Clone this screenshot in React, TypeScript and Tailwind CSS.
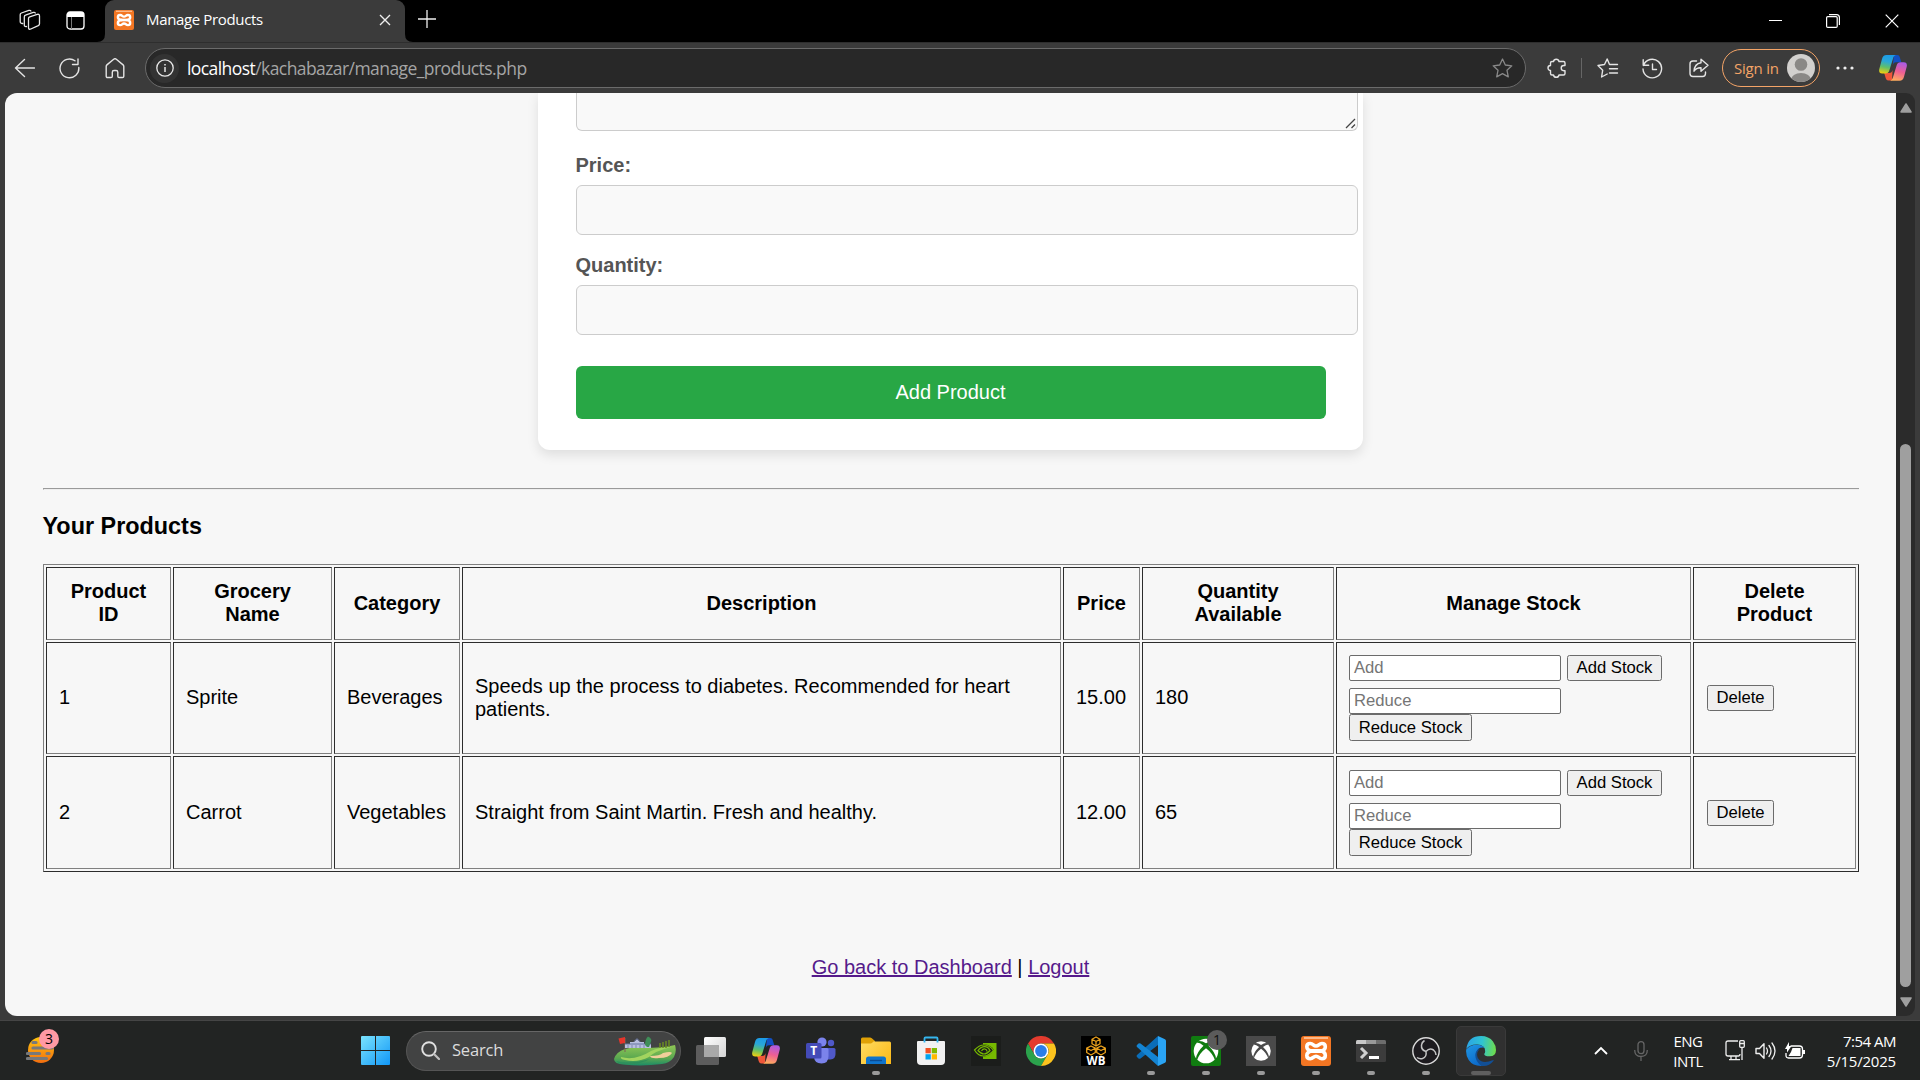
import React from "react";

function Svg({ w, h, vb, children, className = "" }: { w: number; h: number; vb?: string; children: React.ReactNode; className?: string }) {
  return (
    <svg width={w} height={h} viewBox={vb ?? `0 0 ${w} ${h}`} fill="none" className={"block shrink-0 " + className}>
      {children}
    </svg>
  );
}

function Xampp({ size }: { size: number }) {
  return (
    <Svg w={size} h={size} vb="0 0 30 30">
      <rect width="30" height="30" rx="3" fill="#f37623" />
      <path d="M3 1h24v2H3z" fill="#fbb98a" />
      <path
        d="M11.500 15C7 14.500 5.800 12.500 5.800 10.700 5.800 8.600 7.400 7.500 9.300 7.500c3 0 3 2.500 5.700 2.500s2.900-2.500 5.900-2.500c2 0 3.400 1.200 3.400 3.200 0 1.900-1.200 3.800-4.800 4.300 3.700.5 4.800 2.400 4.800 4.500 0 2-1.400 3.200-3.400 3.200-3 0-3.100-2.500-5.900-2.500s-2.700 2.500-5.700 2.500c-2 0-3.500-1.200-3.500-3.200 0-2.100 1.200-4 5.700-4.500z"
        stroke="#fff"
        strokeWidth="3.600"
        strokeLinejoin="round"
      />
      <path d="M10 15h10" stroke="#fff" strokeWidth="4" />
    </Svg>
  );
}

function Copilot() {
  return (
    <Svg w={28} h={26}>
      <defs>
        <linearGradient id="cpa" x1="10" y1="0" x2="6" y2="19" gradientUnits="userSpaceOnUse">
          <stop stopColor="#1b9be8" />
          <stop offset=".35" stopColor="#2aa7d8" />
          <stop offset=".65" stopColor="#5fbf6b" />
          <stop offset="1" stopColor="#f4cf0b" />
        </linearGradient>
        <linearGradient id="cpb" x1="22" y1="7" x2="17" y2="26" gradientUnits="userSpaceOnUse">
          <stop stopColor="#a95be6" />
          <stop offset=".5" stopColor="#ee5f93" />
          <stop offset="1" stopColor="#ffb05c" />
        </linearGradient>
      </defs>
      <path d="M15 0h3c2 0 2.500 1.300 3 3l1.300 4.200H17c-2 0-2.600 1-3.200 3z" fill="#1250c4" />
      <path d="M13 25.500H9.500c-2 0-2.600-1.500-3-3L5.200 18H10c2.300 0 3-1 3.600-3z" fill="#f0573a" />
      <path d="M7.500 0H17c-1.800.4-2.400 1.600-2.900 3.200L10.300 15.500c-.6 2-1.700 3-3.900 3H3.200C.5 18.500-.3 16.600.3 14L3 4C3.700 1.500 5 0 7.500 0z" fill="url(#cpa)" />
      <path d="M20.500 25.800H11c1.800-.4 2.400-1.600 2.900-3.200l3.800-12.300c.6-2 1.700-3 3.900-3h3.200c2.700 0 3.500 1.900 2.900 4.500L25 21.800c-.7 2.500-2 4-4.500 4z" fill="url(#cpb)" />
    </Svg>
  );
}

const tool = { stroke: "#e4e4e4", strokeWidth: 1.4, strokeLinecap: "round" as const, strokeLinejoin: "round" as const };

function TabStrip() {
  return (
    <div className="flex h-[42px] w-full shrink-0 items-start bg-black">
      <div className="flex h-[42px] w-[97px] items-center gap-[25px] pl-[19px] pb-[2px]">
        <Svg w={22} h={22}>
          <g stroke="#e8e8e8" strokeWidth="1.300" strokeLinejoin="round" strokeLinecap="round">
            <path d="M9.500 9.500q0-1.300 1.200-1.700l7.500-2.400q2.300-.7 2.300 1.500v7.800q0 1.400-1.200 2L11.800 20q-2.300.9-2.300-1.300z" />
            <path d="M7.500 17.500q-2.200.4-2.200-1.600V7.900q0-1.300 1.200-1.700L14.300 3.400q1.500-.4 2 .6" />
            <path d="M3.800 14.500q-2.600.2-2.600-2V5.700q0-1.300 1.200-1.700l7.500-2.600q1.500-.4 2 .6" />
          </g>
        </Svg>
        <Svg w={19} h={19}>
          <rect x="1" y="1" width="17" height="17" rx="3" stroke="#fff" strokeWidth="1.300" />
          <path d="M1 6V4q0-3 3-3h11q3 0 3 3v2z" fill="#fff" />
          <path d="M5.500 6v12" stroke="#777" />
        </Svg>
      </div>
      <Svg w={8} h={42}>
        <path d="M8 34q0 8-8 8h8z" fill="#3b3b3b" />
      </Svg>
      <div className="flex h-[42px] w-[300px] items-center rounded-t-[9px] bg-[#3b3b3b] pl-[9px] pb-[2px]">
        <Xampp size={20} />
        <span className="ml-[12px] w-[233px] whitespace-nowrap pb-[2px] font-['Open_Sans','Noto_Sans',sans-serif] text-[15px] tracking-[-0.35px] text-white">Manage Products</span>
        <Svg w={12} h={12}>
          <path d="M1 1l10 10M11 1L1 11" stroke="#eee" strokeWidth="1.400" />
        </Svg>
      </div>
      <Svg w={8} h={42}>
        <path d="M0 34q0 8 8 8H0z" fill="#3b3b3b" />
      </Svg>
      <Svg w={18} h={18} className="ml-[5px] mt-[10px]">
        <path d="M9 0v18M0 9h18" stroke="#eee" strokeWidth="1.300" />
      </Svg>
      <div className="ml-auto flex h-[42px] items-center gap-[44.500px] pr-[21.500px]">
        <Svg w={13} h={14}>
          <path d="M0 6.500h13" stroke="#fff" />
        </Svg>
        <Svg w={14} h={14}>
          <rect x=".6" y="2.600" width="10.600" height="10.800" rx="1.200" stroke="#fff" strokeWidth="1.200" />
          <path d="M3 .6h7.500q2.900 0 2.900 2.900V11" stroke="#fff" strokeWidth="1.200" />
        </Svg>
        <Svg w={14} h={14}>
          <path d="M.7.7l12.600 12.600M13.300.7L.7 13.300" stroke="#fff" strokeWidth="1.200" />
        </Svg>
      </div>
    </div>
  );
}

function Toolbar() {
  return (
    <div className="flex h-[51px] w-full shrink-0 items-center border-t border-[#2e2e2e] bg-[#3b3b3b]">
      <div className="flex w-[145px] shrink-0 items-center gap-[24px] pl-[14px]">
        <Svg w={21} h={20}>
          <path d="M10.500 1.500L1.500 10l9 8.500M1.500 10h19" {...tool} />
        </Svg>
        <Svg w={21} h={21}>
          <path d="M19.800 9.500A9.400 9.400 0 1 1 16 2.800M19 1v5.500h-5.500" {...tool} />
        </Svg>
        <Svg w={20} h={21} className="ml-px">
          <path d="M1.200 8.500q0-1 .7-1.600l6.800-5.700q1.300-1 2.600 0l6.800 5.700q.7.600.7 1.600v9.700q0 1.300-1.300 1.300h-3.400q-1.300 0-1.300-1.300v-4q0-1.700-1.700-1.700H9q-1.700 0-1.700 1.700v4q0 1.300-1.300 1.300H2.500q-1.300 0-1.300-1.300z" {...tool} />
        </Svg>
      </div>
      <div className="flex h-[40px] w-[1381px] shrink-0 items-center rounded-full border border-[#6b6b6b] bg-[#282828] pl-[4px] pr-[12px]">
        <div className="flex size-[29px] items-center justify-center rounded-full bg-[#333]">
          <Svg w={18} h={18}>
            <circle cx="9" cy="9" r="8.200" stroke="#e8e8e8" strokeWidth="1.300" />
            <path d="M9 8v5M9 5v1.500" stroke="#e8e8e8" strokeWidth="1.500" />
          </Svg>
        </div>
        <div className="ml-[8px] whitespace-nowrap font-['Open_Sans','Noto_Sans',sans-serif] text-[17.500px] tracking-[-0.570px] text-[#a5a5a5]">
          <span className="text-white">localhost</span>/kachabazar/manage_products.php
        </div>
        <Svg w={21} h={20} className="ml-auto">
          <path d="M10.500 1l2.800 6 6.500.8-4.800 4.500 1.300 6.600-5.800-3.300-5.800 3.300L6 12.300 1.200 7.800l6.500-.8z" stroke="#888" strokeWidth="1.300" strokeLinejoin="round" />
        </Svg>
      </div>
      <div className="flex h-full grow items-center">
        <Svg w={20} h={20} className="ml-[21px]">
          <path d="M6.500 3.500A2.800 2.800 0 0 1 12 3.500h4.500q1.500 0 1.500 1.500v2.500h-1.200a2.600 2.600 0 0 0 0 5.200H18V15.500q0 1.500-1.500 1.500H12a2.800 2.800 0 0 1-5.500 0H5q-1.500 0-1.500-1.500v-3a2.500 2.500 0 0 1 0-5V5q0-1.500 1.500-1.500z" {...tool} />
        </Svg>
        <div className="ml-[14px] h-[20px] w-px bg-[#666]" />
        <Svg w={22} h={20} className="ml-[15px]">
          <path d="M12.500 6.500L10.200 1 7.500 6.500 1 7.500l4.700 4.700L4.600 19l5.600-3M12.500 6.500H20.500M12.500 10.800h8M12.500 15h8" {...tool} />
        </Svg>
        <Svg w={21} h={21} className="ml-[23px]">
          <path d="M1.500 7.500A9.300 9.300 0 1 1 1 11M1.200 1.800v5.500h5.500M10.500 6v5.500h4" {...tool} />
        </Svg>
        <Svg w={20} h={20} className="ml-[26px]">
          <path d="M7.500 3H4Q1 3 1 6v9.500q0 3 3 3h9.500q3 0 3-3V14" {...tool} />
          <path d="M12 1.200l7 6-7 6V9.800q-4.500-.3-7 3.400.5-7.500 7-8.500z" {...tool} />
        </Svg>
        <div className="ml-[13px] flex h-[38px] w-[98px] shrink-0 items-center justify-between rounded-full border-[1.500px] border-[#f4a467] pl-[11px] pr-[4px]">
          <span className="whitespace-nowrap font-['Open_Sans','Noto_Sans',sans-serif] text-[15px] tracking-[-0.200px] text-[#f4a467]">Sign in</span>
          <Svg w={28} h={28}>
            <clipPath id="av"><circle cx="14" cy="14" r="14" /></clipPath>
            <circle cx="14" cy="14" r="14" fill="#d2d0ce" />
            <g clipPath="url(#av)" fill="#8a8886">
              <circle cx="14" cy="10.500" r="6.300" />
              <ellipse cx="14" cy="26" rx="10" ry="7" />
            </g>
          </Svg>
        </div>
        <Svg w={18} h={4} className="ml-[16px]">
          <circle cx="2" cy="2" r="1.600" fill="#eee" />
          <circle cx="9" cy="2" r="1.600" fill="#eee" />
          <circle cx="16" cy="2" r="1.600" fill="#eee" />
        </Svg>
        <div className="ml-[25px]"><Copilot /></div>
      </div>
    </div>
  );
}

function Field({ label }: { label: string }) {
  return (
    <div className="h-[100px]">
      <div className="h-[35px] pt-[4px] text-[20px] font-bold leading-[23px] text-[#555]">{label}</div>
      <div className="h-[50px] w-[782px] rounded-[6px] border border-[#ccc] bg-[#f9f9f9]" />
    </div>
  );
}

const cell = "border border-t-[#2c2c2c] border-l-[#2c2c2c] border-b-[#808080] border-r-[#808080]";
const btn = "box-border rounded-[2.500px] border border-[#6b6b6b] bg-[#efefef] text-[16.667px] leading-[19px] text-black flex items-center justify-center whitespace-nowrap pb-px";
const field = "flex h-[26px] w-[212px] items-center rounded-[2px] border border-[#6b6b6b] bg-white pl-[4px] pb-px text-[16.667px] leading-[19px] text-[#757575]";

const headers = ["Product\nID", "Grocery\nName", "Category", "Description", "Price", "Quantity\nAvailable", "Manage Stock", "Delete\nProduct"];
const rows = [
  ["1", "Sprite", "Beverages", "Speeds up the process to diabetes. Recommended for heart patients.", "15.00", "180"],
  ["2", "Carrot", "Vegetables", "Straight from Saint Martin. Fresh and healthy.", "12.00", "65"],
];

function ProductTable() {
  return (
    <table className="mt-[25px] w-[1816px] table-fixed border-separate border-spacing-[2px] border border-t-[#808080] border-l-[#808080] border-b-[#2c2c2c] border-r-[#2c2c2c] text-[20px] leading-[23px]">
      <colgroup>
        <col className="w-[125px]" />
        <col className="w-[159px]" />
        <col className="w-[126px]" />
        <col className="w-[599px]" />
        <col className="w-[77px]" />
        <col className="w-[192px]" />
        <col className="w-[355px]" />
        <col className="w-[163px]" />
      </colgroup>
      <thead>
        <tr className="h-[73px]">
          {headers.map((h) => (
            <th key={h} className={cell + (h.includes("\n") ? " pb-[2px]" : " pb-0") + " whitespace-pre px-0 pt-0 text-center align-middle font-bold"}>{h}</th>
          ))}
        </tr>
      </thead>
      <tbody>
        {rows.map((r, i) => (
          <tr key={r[0]} className={i === 0 ? "h-[112px]" : "h-[113px]"}>
            {r.map((c, j) => (
              <td key={j} className={cell + (i === 0 && j !== 3 ? " pb-[2px]" : " pb-0") + " pt-0 pl-[12px] pr-0 align-middle"}>
                <div className={j === 3 ? "w-[572px]" : "whitespace-nowrap"}>{c}</div>
              </td>
            ))}
            <td className={cell + " px-[12px] pt-[12px] pb-0 align-top"}>
              <div className={i === 0 ? "flex gap-[6px]" : "flex gap-[6px] pt-px"}>
                <div className={field}>Add</div>
                <div className={btn + " h-[26px] w-[95px]"}>Add Stock</div>
              </div>
              <div className={field + " mt-[7px]"}>Reduce</div>
              <div className={btn + " h-[27px] w-[123px]"}>Reduce Stock</div>
            </td>
            <td className={cell + " px-[13px] py-0 align-middle"}>
              <div className={btn + " h-[26px] w-[67px]"}>Delete</div>
            </td>
          </tr>
        ))}
      </tbody>
    </table>
  );
}

function Page() {
  return (
    <div className="flex h-[923px] w-[1891px] shrink-0 flex-col overflow-hidden rounded-l-[12px] bg-[#f7f7f7] px-[38px] font-['Liberation_Sans',Arial,sans-serif] text-black">
      <div className="-mt-px ml-[495px] flex h-[358px] w-[825px] shrink-0 flex-col rounded-b-[12px] bg-white pl-[37.500px] shadow-[0_5px_12px_rgba(0,0,0,0.1)]">
        <div className="relative h-[39px] w-[782px] shrink-0 rounded-b-[6px] border border-t-0 border-[#ccc] bg-[#f9f9f9]">
          <svg width="11" height="11" viewBox="0 0 11 11" className="absolute bottom-px right-px">
            <path d="M1 10L10 1M6.500 10L10 6.500" stroke="#444" strokeWidth="1.300" />
          </svg>
        </div>
        <div className="h-[19px] shrink-0" />
        <Field label="Price:" />
        <Field label="Quantity:" />
        <div className="mt-[16px] flex h-[53px] w-[750px] items-center justify-center rounded-[6px] bg-[#28a745] text-[20px] leading-[23px] text-white">Add Product</div>
      </div>
      <div className="mt-[38px] h-[2px] w-[1816px] shrink-0 border-t border-l border-[#9a9a9a] border-b border-b-[#eee]" />
      <h3 className="-ml-[0.500px] mt-[23px] text-[23.400px] font-bold leading-[26px]">Your Products</h3>
      <ProductTable />
      <div className="mt-[84px] text-center text-[20px] leading-[23px]">
        <a className="text-[#551a8b] underline">Go back to Dashboard</a> | <a className="text-[#551a8b] underline">Logout</a>
      </div>
    </div>
  );
}

function Scrollbar() {
  return (
    <div className="flex h-[923px] w-[19px] shrink-0 flex-col items-center rounded-r-[9px] bg-[#2b2b2b] pt-[10px]">
      <Svg w={12} h={10}>
        <path d="M6 1l5 8H1z" fill="#9f9f9f" stroke="#9f9f9f" strokeWidth="1.500" strokeLinejoin="round" />
      </Svg>
      <div className="mt-[331px] h-[543px] w-[11px] rounded-full bg-[#9f9f9f]" />
      <Svg w={12} h={10} className="mt-[10px]">
        <path d="M6 9l5-8H1z" fill="#9f9f9f" stroke="#9f9f9f" strokeWidth="1.500" strokeLinejoin="round" />
      </Svg>
    </div>
  );
}

function XboxSphere({ bg }: { bg: string }) {
  return (
    <>
      <circle cx="15" cy="15" r="12.300" fill="#fff" />
      <path d="M6.500 5.200Q10 4 15 7.300 20 4 23.500 5.200 24.500 6 25 6.600 21.500 6.200 17.500 9.800 24.500 16.500 25 22.800L24 24.200Q21.500 17 15 12.200 8.500 17 6 24.200L5 22.800Q5.500 16.500 12.500 9.800 8.500 6.200 5 6.600z" fill={bg} />
    </>
  );
}

const apps: { name: string; icon: React.ReactNode; open?: boolean; active?: boolean; badge?: string }[] = [
  {
    name: "task-view",
    icon: (
      <Svg w={30} h={30}>
        <defs>
          <linearGradient id="tv" x1="8" y1="1" x2="30" y2="21" gradientUnits="userSpaceOnUse"><stop stopColor="#fff" /><stop offset="1" stopColor="#d4d4d4" /></linearGradient>
        </defs>
        <rect x="8" y="1" width="22" height="20" rx="1.500" fill="url(#tv)" />
        <rect x="0" y="9" width="23" height="20" rx="1.500" fill="#5d5d5d" />
        <path d="M8 9h13.500q1.500 0 1.500 1.500V21H8z" fill="#a9a9a9" />
      </Svg>
    ),
  },
  { name: "copilot", icon: <Copilot /> },
  {
    name: "teams",
    icon: (
      <Svg w={30} h={28}>
        <circle cx="25" cy="6" r="3.200" fill="#5059c9" />
        <path d="M20 11h8q1.500 0 1.500 1.500V17q0 5-5 5.500H20z" fill="#5059c9" />
        <circle cx="16" cy="5" r="4.600" fill="#7b83eb" />
        <path d="M9 11h12q1.500 0 1.500 1.500V19q0 7.500-7 7.500T8 20z" fill="#7b83eb" />
        <rect x="0" y="6" width="15.500" height="15.500" rx="1.500" fill="#444bb8" />
        <text x="7.700" y="18" textAnchor="middle" fontFamily="Open Sans" fontWeight="700" fontSize="12" fill="#fff">T</text>
      </Svg>
    ),
  },
  {
    name: "explorer",
    open: true,
    icon: (
      <Svg w={30} h={28}>
        <defs>
          <linearGradient id="fo" x1="0" y1="4" x2="30" y2="28" gradientUnits="userSpaceOnUse"><stop stopColor="#ffdc62" /><stop offset="1" stopColor="#fbb917" /></linearGradient>
        </defs>
        <path d="M0 2q0-1.500 1.500-1.500H9q1 0 1.800.8L14 4v4H0z" fill="#e0a106" />
        <path d="M0 6.500h9.500q1 0 1.700-.8L12.500 4.500H28.500q1.500 0 1.500 1.500v21H0z" fill="url(#fo)" />
        <path d="M5 27v-5q0-2.500 2.500-2.500h15q2.500 0 2.500 2.500v5z" fill="#0f74cc" />
        <path d="M9 23.500h12" stroke="#0a4c94" strokeWidth="1.400" />
      </Svg>
    ),
  },
  {
    name: "store",
    icon: (
      <Svg w={30} h={30}>
        <path d="M8.500 6.500V2.500Q8.500 1.500 9.500 1.500h11Q21.500 1.500 21.500 2.500v4" stroke="#35b6ee" strokeWidth="1.800" />
        <path d="M1 6q0-1 1-1h26q1 0 1 1v19q0 4-4 4H5q-4 0-4-4z" fill="#f1f1f1" />
        <path d="M8.500 6.500V5M21.500 6.500V5" stroke="#35b6ee" strokeWidth="1.800" />
        <path d="M9.500 12h5.300v5.300H9.500z" fill="#f25022" />
        <path d="M15.700 12H21v5.300h-5.300z" fill="#7fba00" />
        <path d="M9.500 18.200h5.300v5.300H9.500z" fill="#00a4ef" />
        <path d="M15.700 18.200H21v5.300h-5.300z" fill="#ffb900" />
      </Svg>
    ),
  },
  {
    name: "nvidia",
    icon: (
      <Svg w={30} h={30}>
        <rect width="30" height="30" fill="#1b1d1b" />
        <path d="M12 7h13.500v16H12z" fill="#76b900" />
        <path d="M3 14Q8 8.500 13.500 8.500q5.500 0 9.500 5.500-4.500 6.500-10 6.500T3 14z" fill="#1b1d1b" />
        <path d="M3.500 14Q8 9 13 9t9.500 5.300Q18 20 12.500 20T3.500 14zM7 14.500q3-3.800 6.500-3.800T19 14.500q-3 3.500-6 3.500t-6-3.500zM10.500 15q1.500-2.500 3.500-2t2 2.500" stroke="#76b900" strokeWidth="1.200" />
      </Svg>
    ),
  },
  {
    name: "chrome",
    icon: (
      <Svg w={30} h={30}>
        <path d="M2 7.500A15 15 0 0 1 28 7.500H15A7.500 7.500 0 0 0 8.500 18.700z" fill="#e33b2e" />
        <path d="M2 7.500A15 15 0 0 0 15 30l6.500-11.200A7.500 7.500 0 0 1 8.500 18.700z" fill="#2ba24c" />
        <path d="M28 7.500A15 15 0 0 1 15 30l6.500-11.200A7.500 7.500 0 0 0 15 7.500z" fill="#fcc31e" />
        <circle cx="15" cy="15" r="7.500" fill="#fff" />
        <circle cx="15" cy="15" r="5.900" fill="#2a7de9" />
      </Svg>
    ),
  },
  {
    name: "workbench",
    icon: (
      <div className="relative flex h-[30px] w-[30px] flex-col items-center bg-black">
        <Svg w={30} h={20}>
          <g stroke="#e9a01c" strokeWidth="1.300" strokeLinejoin="round">
            <path d="M15 1l4 2.300v4.400l-4 2.300-4-2.300V3.300zM11 3.300l4 2.200 4-2.200M15 5.500V10" />
            <path d="M10 10l4.300 2.200v4.300L10 19l-4.300-2.500v-4.300zM5.700 12.200L10 14.500l4.300-2.300" />
            <path d="M20 10l4.300 2.200v4.300L20 19l-4.300-2.500v-4.300zM15.700 12.200l4.300 2.300 4.300-2.300" />
          </g>
        </Svg>
        <span className="-mt-[1px] text-[11.500px] font-bold leading-[12px] text-white">WB</span>
      </div>
    ),
  },
  {
    name: "vscode",
    open: true,
    icon: (
      <Svg w={30} h={30}>
        <path d="M22 0L1 19q-1 1 0 2l1.500 1.400q1 .8 2 0L22 9z" fill="#0a6db8" />
        <path d="M22 30L1 11q-1-1 0-2l1.500-1.400q1-.8 2 0L22 21z" fill="#1484d2" />
        <path d="M22 0v30l7-3.300q1-.5 1-1.700V5q0-1.200-1-1.700z" fill="#2aa4f4" />
      </Svg>
    ),
  },
  {
    name: "xbox",
    open: true,
    badge: "1",
    icon: (
      <Svg w={30} h={30}>
        <rect width="30" height="30" rx="2" fill="#107c10" />
        <XboxSphere bg="#107c10" />
      </Svg>
    ),
  },
  {
    name: "game-bar",
    open: true,
    icon: (
      <Svg w={30} h={30}>
        <rect width="30" height="30" fill="#4a4a4a" />
        <g transform="translate(3.200 3.200) scale(.79)"><XboxSphere bg="#4a4a4a" /></g>
      </Svg>
    ),
  },
  { name: "xampp", open: true, icon: <Xampp size={30} /> },
  {
    name: "terminal",
    open: true,
    icon: (
      <Svg w={30} h={22}>
        <rect width="30" height="22" rx="1.500" fill="#3c3c3c" />
        <path d="M0 4V1.500Q0 0 1.500 0H10v4z" fill="#c8c8c8" />
        <path d="M10 0h10v4H10z" fill="#999" />
        <path d="M20 0h8.500Q30 0 30 1.500V4H20z" fill="#6d6d6d" />
        <path d="M5 8l5 5-5 5" stroke="#cfcfcf" strokeWidth="3" />
        <path d="M13 17.500h10" stroke="#fff" strokeWidth="3" />
      </Svg>
    ),
  },
  {
    name: "obs",
    open: true,
    icon: (
      <Svg w={28} h={28}>
        <circle cx="14" cy="14" r="13.200" fill="#1d1b1f" stroke="#d9d9d9" strokeWidth="1.400" />
        <g stroke="#c4c4c4" strokeWidth="1.500">
          <path d="M14 14.500Q9 13 9.500 8 10 5 12.500 3.500" />
          <path d="M14 14.500Q17.500 10.500 21.500 13q2.500 2 2.500 5" />
          <path d="M14 14.500Q15 20 10.500 21.500 7.500 22.300 5 20.500" />
        </g>
      </Svg>
    ),
  },
  {
    name: "edge",
    open: true,
    active: true,
    icon: (
      <Svg w={30} h={30}>
        <defs>
          <linearGradient id="ea" x1="1" y1="8" x2="30" y2="12" gradientUnits="userSpaceOnUse"><stop stopColor="#2ba5e6" /><stop offset=".5" stopColor="#2fc3d2" /><stop offset="1" stopColor="#6fdc4a" /></linearGradient>
          <linearGradient id="eb" x1="2" y1="12" x2="14" y2="30" gradientUnits="userSpaceOnUse"><stop stopColor="#1c8fe0" /><stop offset="1" stopColor="#0b66c8" /></linearGradient>
        </defs>
        <path d="M.3 13Q2 0 15 0q8 0 12 5.500 3 4 3 8.500 0 6.300-6.500 6.300-5.300 0-5.300-2.300 1-1 1-3Q19 9 11.500 8.500 4 8 .3 13z" fill="url(#ea)" />
        <path d="M.2 13.500Q4 8.700 11 8.700q5 0 7.500 3-7-1-8.200 5.300-.8 7 6.200 12.900Q7 30.500 2.700 24-.4 19.500.2 13.500z" fill="url(#eb)" />
        <path d="M12.500 14.500q-2.500 3-.6 7.500 4 6.500 14.800 2.200 1.500-.6.700.7Q23 30.400 15.500 30 8.300 24.500 9.500 17.500q.7-3.500 4.500-5z" fill="#124f95" />
      </Svg>
    ),
  },
];

function Taskbar() {
  return (
    <div className="flex h-[60px] w-full shrink-0 items-center border-t border-[#454545] bg-[#222423] font-['Open_Sans','Noto_Sans',sans-serif]">
      <div className="relative ml-[26px] h-[46px] w-[335px] shrink-0">
        <Svg w={34} h={46}>
          <defs>
            <linearGradient id="sun" x1="0" y1="10" x2="0" y2="36" gradientUnits="userSpaceOnUse"><stop stopColor="#ffc20e" /><stop offset="1" stopColor="#f06a10" /></linearGradient>
          </defs>
          <circle cx="15" cy="22" r="13" fill="url(#sun)" />
          <path d="M7 14.500h3M7 20h19M1.500 25.500h12M21 25.500h2M1.500 30.500h19" stroke="#77797b" strokeWidth="3.200" strokeLinecap="round" />
        </Svg>
        <div className="absolute left-[13px] top-[1px] flex size-[20px] items-center justify-center rounded-full bg-[#ff99a4] text-[14px] leading-none text-black">3</div>
      </div>
      <Svg w={29} h={29}>
        <defs>
          <linearGradient id="win" x1="0" y1="0" x2="29" y2="29" gradientUnits="userSpaceOnUse"><stop stopColor="#7ae3fd" /><stop offset="1" stopColor="#1197f7" /></linearGradient>
        </defs>
        <path d="M1 0h13v14H0V1q0-1 1-1zM15 0h13q1 0 1 1v13H15zM0 15h14v14H1q-1 0-1-1zM15 15h14v13q0 1-1 1H15z" fill="url(#win)" />
      </Svg>
      <div className="ml-[16px] flex h-[40px] w-[275px] shrink-0 items-center rounded-full border border-[#555] border-t-[#666] bg-[#424343] pl-[14px] pr-[4px]">
        <Svg w={19} h={19}>
          <circle cx="8" cy="8" r="6.800" stroke="#e0e0e0" strokeWidth="1.900" />
          <path d="M13 13l5 5" stroke="#c0c0c0" strokeWidth="2.200" strokeLinecap="round" />
        </Svg>
        <span className="ml-[12px] text-[16.500px] tracking-[-0.200px] text-[#dcdcdc]">Search</span>
        <Svg w={62} h={30} className="ml-auto">
          <defs>
            <linearGradient id="golf" x1="0" y1="10" x2="0" y2="30" gradientUnits="userSpaceOnUse"><stop stopColor="#8cc455" /><stop offset=".6" stopColor="#5ba850" /><stop offset="1" stopColor="#188a68" /></linearGradient>
          </defs>
          <path d="M0 23Q2 16 11 13q10-3 22-1.500 12 1 28-2.500 2 6-1 12-4 6-12 7-20 2.500-38 .5Q0 28 0 23z" fill="url(#golf)" />
          <path d="M7 21q14 4 30-6 8-4 20-4-16 4-22 10-12 6-24 3-5-1-4-3z" fill="#a3d45f" />
          <path d="M2 25q14 4 34-2-12 7-30 5z" fill="#2e8f5c" />
          <path d="M36 20q10 0 13-3 8-2 9 0-3 5-13 5-8 1-9-2z" fill="#f0cf9a" />
          <path d="M11 2v14" stroke="#7d6252" />
          <path d="M4.500 2.500L11 1v6l-5 1z" fill="#e5352b" />
          <path d="M11 8h5V6h4l3-3 3 3h4v2h7v4H11z" fill="#b8bfe0" />
          <path d="M11 8h26M20 5.500l3-3 3 3" stroke="#65729c" />
          <path d="M14 9v3M18 9v3M22 9v3M26 9v3M30 9v3" stroke="#7f86b0" />
          <path d="M31 9q0-6 3-8.500 5 2 2.500 6.500L35 11h-2z" fill="#3f8e58" />
          <path d="M46 12V7M49 12V6M52 12V5M55 11V4" stroke="#6b8c22" strokeWidth="1.500" />
        </Svg>
      </div>
      <div className="ml-[2px] grid h-[50px] w-[826px] shrink-0 grid-cols-15">
        {apps.map((a) => (
          <div key={a.name} className="relative flex items-center justify-center">
            <div className={a.active ? "flex h-[50px] w-[50px] items-center justify-center rounded-[5px] border border-[#3a3a3a] bg-[#303030]" : "flex items-center justify-center"}>{a.icon}</div>
            {a.badge && <div className="absolute left-[28.500px] top-[4px] flex size-[20px] items-center justify-center rounded-full bg-[#5b5b5b] text-[14px] leading-none text-[#111]">{a.badge}</div>}
            {a.open && <div className={a.active ? "absolute bottom-px left-1/2 h-[4px] w-[20px] -translate-x-1/2 rounded-full bg-[#5f5f5f]" : "absolute bottom-px left-1/2 h-[4px] w-[8px] -translate-x-1/2 rounded-full bg-[#9a9a9a]"} />}
          </div>
        ))}
      </div>
      <div className="flex grow items-center pr-[24px] text-white">
        <Svg w={14} h={9} className="ml-[85px]">
          <path d="M1 8l6-6 6 6" stroke="#fff" strokeWidth="1.800" />
        </Svg>
        <Svg w={14} h={20} className="ml-[26px]">
          <rect x="4" y=".7" width="6" height="12" rx="3" stroke="#666" strokeWidth="1.300" />
          <path d="M.7 9q0 6.500 6.300 6.500T13.300 9M7 15.500V20" stroke="#666" strokeWidth="1.300" />
        </Svg>
        <div className="ml-[22px] w-[36px] whitespace-nowrap text-center text-[15px] leading-[20px] tracking-[-0.500px]">ENG<br />INTL</div>
        <Svg w={20} h={21} className="ml-[19px]">
          <path d="M13 1H3Q1 1 1 3v11q0 2 2 2h10.500q1.500 0 1.500-2M6 16v3.500M11 16v3.500M4 19.700h11" stroke="#eee" strokeWidth="1.300" />
          <rect x="14.700" y=".7" width="4.600" height="6.600" rx="1" stroke="#eee" strokeWidth="1.300" />
          <path d="M17 7.500V20M15 3.500h4" stroke="#eee" strokeWidth="1.300" />
        </Svg>
        <Svg w={21} h={18} className="ml-[9.500px]">
          <path d="M1 6.500h3.500L9 1.800v14.400L4.500 11.500H1z" stroke="#eee" strokeWidth="1.400" strokeLinejoin="round" />
          <path d="M11.500 6q2 3 0 6M14 3.500q4 5.500 0 11M17 1q6 8 0 16" stroke="#eee" strokeWidth="1.300" strokeLinecap="round" />
        </Svg>
        <Svg w={20} h={18} className="ml-[9px]">
          <path d="M5.500 4h9q3 0 3 3v6q0 3-3 3h-11q-2.500 0-2.500-2.500V11" stroke="#fff" strokeWidth="1.300" />
          <path d="M7.500 6h8v8h-12l2.500-4z" fill="#fff" />
          <path d="M18 8h2v4h-2zM4 0v4h2.500L2 10.500V7H0z" fill="#fff" />
        </Svg>
        <div className="ml-auto whitespace-nowrap text-right text-[15px] leading-[20px] tracking-[-0.200px]"><span className="tracking-[-0.500px]">7:54 AM</span><br />5/15/2025</div>
      </div>
    </div>
  );
}

export default function App() {
  return (
    <div className="flex h-[1080px] w-[1920px] flex-col overflow-hidden bg-[#3b3b3b]">
      <TabStrip />
      <Toolbar />
      <div className="flex h-[927px] w-full shrink-0 pl-[5px]">
        <Page />
        <Scrollbar />
      </div>
      <Taskbar />
    </div>
  );
}
